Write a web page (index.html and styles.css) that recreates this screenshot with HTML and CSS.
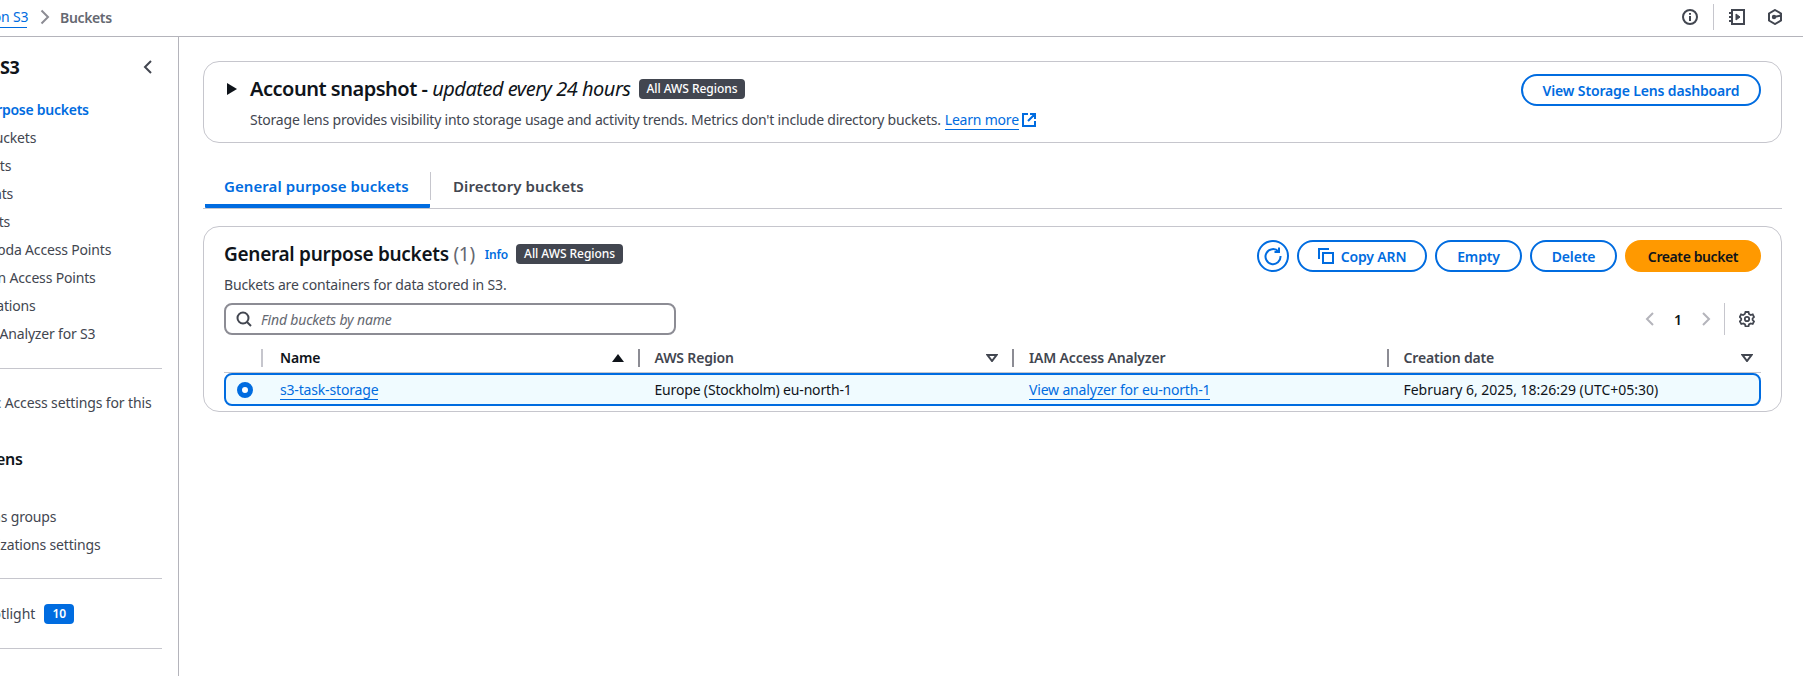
FILE: index.html
```html
<!DOCTYPE html>
<html lang="en">
<head>
<meta charset="utf-8">
<title>S3 Buckets</title>
<link rel="stylesheet" href="styles.css">
</head>
<body>
<div class="page">
  <header class="topbar">
    <nav class="crumbs">
      <a class="crumb-link" href="#">Amazon S3</a>
      <svg class="crumb-sep" width="10" height="16" viewBox="0 0 10 16"><path d="M1.500 1.500 8 8l-6.500 6.500" fill="none" stroke="#8c8c94" stroke-width="2"/></svg>
      <span class="crumb-current">Buckets</span>
    </nav>
    <div class="top-icons">
      <svg width="16" height="16" viewBox="0 0 16 16" fill="none" stroke="#424650" stroke-width="2"><circle cx="8" cy="8" r="7"/><path d="M8 7v5M8 4v1.800"/></svg>
      <span class="top-divider"></span>
      <svg width="16" height="16" viewBox="0 0 16 16" fill="none" stroke="#424650" stroke-width="2"><path d="M3 1h12v14H3z"/><path d="M0 4h4M0 8h4M0 12h4"/><path d="M7 5l4 3-4 3z" fill="#424650" stroke-width="1"/></svg>
      <svg class="hex" width="16" height="16" viewBox="0 0 16 16" fill="none" stroke="#424650" stroke-width="2"><path d="M8 1l6 3.500v7L8 15l-6-3.500v-7z"/><circle cx="7" cy="8" r="2.200" fill="#424650" stroke="none"/><path d="M7 8l7-1.500" stroke-width="2"/></svg>
    </div>
  </header>
  <div class="shell">
    <aside class="sidenav">
      <div class="nav-head">
        <h2 class="nav-title">Amazon S3</h2>
        <svg width="16" height="16" viewBox="0 0 16 16"><path d="M11 2 5 8l6 6" fill="none" stroke="#424650" stroke-width="2"/></svg>
      </div>
      <ul class="nav-list">
        <li class="nav-item active">General purpose buckets</li>
        <li class="nav-item">Directory buckets</li>
        <li class="nav-item">Table buckets</li>
        <li class="nav-item">Access Grants</li>
        <li class="nav-item">Access Points</li>
        <li class="nav-item">Object Lambda Access Points</li>
        <li class="nav-item">Multi-Region Access Points</li>
        <li class="nav-item">Batch Operations</li>
        <li class="nav-item">IAM Access Analyzer for S3</li>
      </ul>
      <hr class="nav-rule rule-a">
      <p class="nav-block">Block Public Access settings for this account</p>
      <h3 class="nav-sub">Storage Lens</h3>
      <ul class="nav-list">
        <li class="nav-item dash">Dashboards</li>
        <li class="nav-item">Storage Lens groups</li>
        <li class="nav-item">AWS Organizations settings</li>
      </ul>
      <hr class="nav-rule rule-b">
      <div class="nav-item spotlight">Feature spotlight <span class="count">10</span></div>
      <hr class="nav-rule rule-c">
    </aside>
    <main class="content">
      <section class="card snapshot">
        <div class="snap-text">
          <div class="snap-title">
            <svg class="caret" width="10" height="12" viewBox="0 0 10 12"><path d="M0 0l10 6-10 6z" fill="#0f141a"/></svg>
            <h2 class="snap-heading">Account snapshot - <em>updated every 24 hours</em></h2>
            <span class="badge">All AWS Regions</span>
          </div>
          <p class="snap-desc">Storage lens provides visibility into storage usage and activity trends. Metrics don't include directory buckets. <a class="link" href="#">Learn more</a>
            <svg class="ext" width="16" height="16" viewBox="0 0 16 16" fill="none" stroke="#006ce0" stroke-width="2"><path d="M7 2H2v12h12V9M9 2h5v5M14 2 7 9"/></svg></p>
        </div>
        <button class="btn lens">View Storage Lens dashboard</button>
      </section>
      <div class="tabs">
        <span class="tab active">General purpose buckets</span>
        <span class="tab-sep"></span>
        <span class="tab">Directory buckets</span>
      </div>
      <section class="card buckets">
        <div class="bk-head">
          <div>
            <div class="bk-title">
              <h2 class="bk-heading">General purpose buckets <span class="bk-count">(1)</span></h2>
              <a class="info" href="#">Info</a>
              <span class="badge">All AWS Regions</span>
            </div>
            <p class="bk-desc">Buckets are containers for data stored in S3.</p>
          </div>
          <div class="actions">
            <button class="btn icon-btn"><svg width="20" height="20" viewBox="0 0 20 20" fill="none" stroke="#006ce0" stroke-width="2"><path d="M15.500 5.500A7.500 7.500 0 1 0 17.500 10"/><path d="M16 1.500v4.500h-4.500"/></svg></button>
            <button class="btn copy"><svg width="16" height="16" viewBox="0 0 16 16" fill="none" stroke="#006ce0" stroke-width="2"><path d="M1 11V1h10"/><path d="M5 5h10v10H5z"/></svg>Copy ARN</button>
            <button class="btn empty">Empty</button>
            <button class="btn delete">Delete</button>
            <button class="btn primary">Create bucket</button>
          </div>
        </div>
        <div class="filter-row">
          <div class="search">
            <svg width="16" height="16" viewBox="0 0 16 16" fill="none" stroke="#424650" stroke-width="2"><circle cx="7" cy="7" r="5.500"/><path d="m11 11 4 4"/></svg>
            <span class="placeholder">Find buckets by name</span>
          </div>
          <div class="pager">
            <svg width="16" height="16" viewBox="0 0 16 16"><path d="M11 2 5 8l6 6" fill="none" stroke="#b4b4bb" stroke-width="2"/></svg>
            <span class="page-num">1</span>
            <svg width="16" height="16" viewBox="0 0 16 16"><path d="m5 2 6 6-6 6" fill="none" stroke="#b4b4bb" stroke-width="2"/></svg>
            <span class="pager-sep"></span>
            <svg width="16" height="16" viewBox="0 0 16 16" fill="none" stroke="#424650" stroke-width="1.800"><circle cx="8" cy="8" r="2.200"/><path d="M6.500 1h3l.5 2 1.700 1 2-.6 1.300 2.600-1.400 1.500v1.400l1.400 1.500-1.300 2.600-2-.6-1.700 1-.5 2h-3l-.5-2-1.700-1-2 .6L.8 10.400l1.400-1.500V7.500L.8 6l1.300-2.600 2 .6 1.700-1z"/></svg>
          </div>
        </div>
        <div class="tbl-head">
          <div class="th radio-col"></div>
          <div class="th sorted">Name
            <svg class="sort" width="12" height="8" viewBox="0 0 12 8"><path d="M6 0l6 8H0z" fill="#0f141a"/></svg></div>
          <div class="th muted">AWS Region
            <svg class="sort" width="12" height="8" viewBox="0 0 12 8"><path d="M1.500 1h9L6 7z" fill="none" stroke="#424650" stroke-width="2"/></svg></div>
          <div class="th muted">IAM Access Analyzer</div>
          <div class="th muted">Creation date
            <svg class="sort sort-last" width="12" height="8" viewBox="0 0 12 8"><path d="M1.500 1h9L6 7z" fill="none" stroke="#424650" stroke-width="2"/></svg></div>
        </div>
        <div class="tbl-row">
          <div class="td radio-col"><span class="radio"></span></div>
          <div class="td"><a class="link" href="#">s3-task-storage</a></div>
          <div class="td">Europe (Stockholm) eu-north-1</div>
          <div class="td"><a class="link" href="#">View analyzer for eu-north-1</a></div>
          <div class="td dated">February 6, 2025, 18:26:29 (UTC+05:30)</div>
        </div>
      </section>
    </main>
  </div>
</div>
</body>
</html>
```
FILE: styles.css
```css
* { box-sizing: border-box; }
html, body { margin: 0; height: 100%; overflow: hidden; background: #fff; }
body { font-family: "Noto Sans", sans-serif; font-size: 14px; color: #0f141a; letter-spacing: -0.17px; }
h2, h3, p, ul { margin: 0; padding: 0; }
ul { list-style: none; }
a { color: #006ce0; }
.page { width: 1905px; margin-left: -102px; height: 676px; display: flex; flex-direction: column; }

.topbar { height: 37px; flex: none; border-bottom: 1px solid #b4b4bb; display: flex; align-items: center; justify-content: space-between; padding: 0 20px 2px 59px; }
.crumbs { display: flex; align-items: center; }
.crumb-link { line-height: 20px; text-decoration: none; border-bottom: 1px solid #006ce0; width: 70px; white-space: nowrap; }
.crumb-sep { margin: 0 10px 0 13px; }
.crumb-current { font-weight: 600; color: #656871; letter-spacing: -0.35px; }
.top-icons { display: flex; align-items: center; }
.top-divider { width: 1px; height: 26px; background: #c6c6cd; margin: 0 15px 0 15px; }
.hex { margin-left: 22px; }

.shell { flex: 1; display: flex; min-height: 0; }
.sidenav { width: 281px; flex: none; border-right: 1px solid #b4b4bb; padding: 18px 0 0 26px; }
.nav-head { display: flex; justify-content: space-between; align-items: center; height: 24px; padding-right: 22px; }
.nav-title { font-size: 18px; line-height: 24px; font-weight: 700; letter-spacing: -0.2px; }
.nav-list { margin-top: 17px; }
.nav-item { height: 28px; line-height: 28px; color: #424650; white-space: nowrap; }
.nav-item.active { color: #006ce0; font-weight: 600; letter-spacing: -0.26px; }
.dash { letter-spacing: -0.35px; }
.nav-rule { border: 0; border-top: 1px solid #c6c6cd; margin: 0 0 0 -26px; width: 264px; }
.rule-a { margin-top: 20px; }
.rule-b { margin-top: 19px; }
.rule-c { margin-top: 20px; }
.nav-block { width: 252px; line-height: 22px; color: #424650; margin-top: 23px; height: 44px; letter-spacing: -0.13px; }
.nav-sub { font-size: 16px; font-weight: 600; line-height: 20px; margin-top: 13px; }
.nav-sub + .nav-list { margin-top: 6px; }
.spotlight { display: flex; align-items: center; gap: 9px; margin-top: 21px; letter-spacing: -0.05px; }
.count { background: #006ce0; color: #fff; font-size: 12px; font-weight: 600; line-height: 20px; height: 20px; width: 30px; text-align: center; border-radius: 4px; }

.content { flex: 1; padding: 24px 21px 0 24px; min-width: 0; }
.card { border: 1px solid #c6c6cd; border-radius: 16px; }
.snapshot { height: 82px; display: flex; justify-content: space-between; padding: 12px 20px 0 23px; }
.snap-title { display: flex; align-items: center; height: 28px; margin-top: 1px; }
.caret { margin-right: 13px; }
.snap-heading { font-size: 20px; line-height: 28px; font-weight: 600; letter-spacing: -0.49px; }
.snap-heading em { font-weight: 400; }
.badge { background: #424650; color: #fff; font-size: 12px; font-weight: 500; line-height: 20px; height: 20px; padding: 0 8px; border-radius: 4px; margin-left: 8px; white-space: nowrap; letter-spacing: -0.05px; }
.snap-desc { color: #424650; line-height: 20px; margin: 7px 0 0 23px; font-size: 14px; display: flex; align-items: center; letter-spacing: -0.21px; }
.link { text-decoration: none; border-bottom: 1px solid #006ce0; line-height: 18px; }
.snap-desc .link { margin-left: 4px; }
.ext { margin-left: 2px; }

.btn { font-family: inherit; font-size: 14px; font-weight: 600; letter-spacing: -0.15px; height: 32px; border: 2px solid #006ce0; border-radius: 20px; background: #fff; color: #006ce0; padding: 0; display: inline-flex; align-items: center; justify-content: center; white-space: nowrap; }
.lens { width: 240px; }
.icon-btn { width: 32px; }
.copy { width: 130px; gap: 7px; }
.empty, .delete { width: 87px; }
.primary { width: 136px; background: #f90; border-color: #f90; color: #0f141a; letter-spacing: -0.4px; }

.tabs { height: 66px; margin-bottom: 17px; border-bottom: 1px solid #c6c6cd; display: flex; align-items: flex-start; padding: 29px 0 0 2px; }
.tab { font-size: 15px; font-weight: 600; color: #424650; height: 37px; line-height: 28px; padding: 0 20px; white-space: nowrap; letter-spacing: 0.08px; }
.tab.active { color: #006ce0; border-bottom: 4px solid #006ce0; border-radius: 0 0 1px 1px; width: 225px; height: 36px; padding-left: 19px; }
.tab-sep { width: 1px; height: 28px; background: #c6c6cd; margin-right: 2px; }

.buckets { height: 186px; padding: 13px 20px 0 20px; }
.bk-head { display: flex; justify-content: space-between; }
.bk-title { display: flex; align-items: center; height: 28px; }
.bk-heading { font-size: 19px; line-height: 28px; font-weight: 600; letter-spacing: -0.3px; }
.bk-count { font-weight: 400; color: #656871; }
.info { font-size: 12px; font-weight: 600; text-decoration: none; margin-left: 10px; }
.bk-desc { color: #424650; line-height: 20px; margin-top: 7px; }
.actions { display: flex; gap: 8px; }
.filter-row { display: flex; justify-content: space-between; align-items: center; height: 32px; margin-top: 8px; }
.search { width: 452px; height: 32px; border: 2px solid #8c8c94; border-radius: 8px; display: flex; align-items: center; gap: 9px; padding-left: 10px; }
.placeholder { font-style: italic; color: #656871; }
.pager { display: flex; align-items: center; padding-right: 6px; }
.page-num { font-weight: 600; width: 40px; text-align: center; }
.pager-sep { width: 1px; height: 32px; background: #c6c6cd; margin: 0 14px 0 10px; }

.tbl-head { display: grid; grid-template-columns: 39px repeat(4, 1fr); height: 34px; margin-top: 4px; border-bottom: 1px solid #c6c6cd; }
.tbl-row { display: grid; grid-template-columns: 37px repeat(3, 374.5px) 1fr; height: 33px; background: #f0fbff; border: 2px solid #006ce0; border-radius: 8px; align-items: center; }
.th { position: relative; font-weight: 600; line-height: 18px; margin: 10px 0 0; padding-left: 15px; border-left: 2px solid #8c8c94; height: 18px; }
.radio-col.th { border-left: 0; border-right: 2px solid #c6c6cd; padding: 0; }
.th.sorted { border-left: 0; padding-left: 17px; border-right: 0; }
.th.muted { color: #424650; }
.sort { position: absolute; right: 14px; top: 5px; }
.sort-last { right: 8px; }
.td { padding-left: 17px; white-space: nowrap; line-height: 20px; }
.dated { letter-spacing: -0.02px; }
.td.radio-col { padding: 0; display: flex; justify-content: flex-start; padding-left: 11px; }
.radio { width: 16px; height: 16px; border-radius: 50%; border: 5px solid #006ce0; background: #fff; }
```
